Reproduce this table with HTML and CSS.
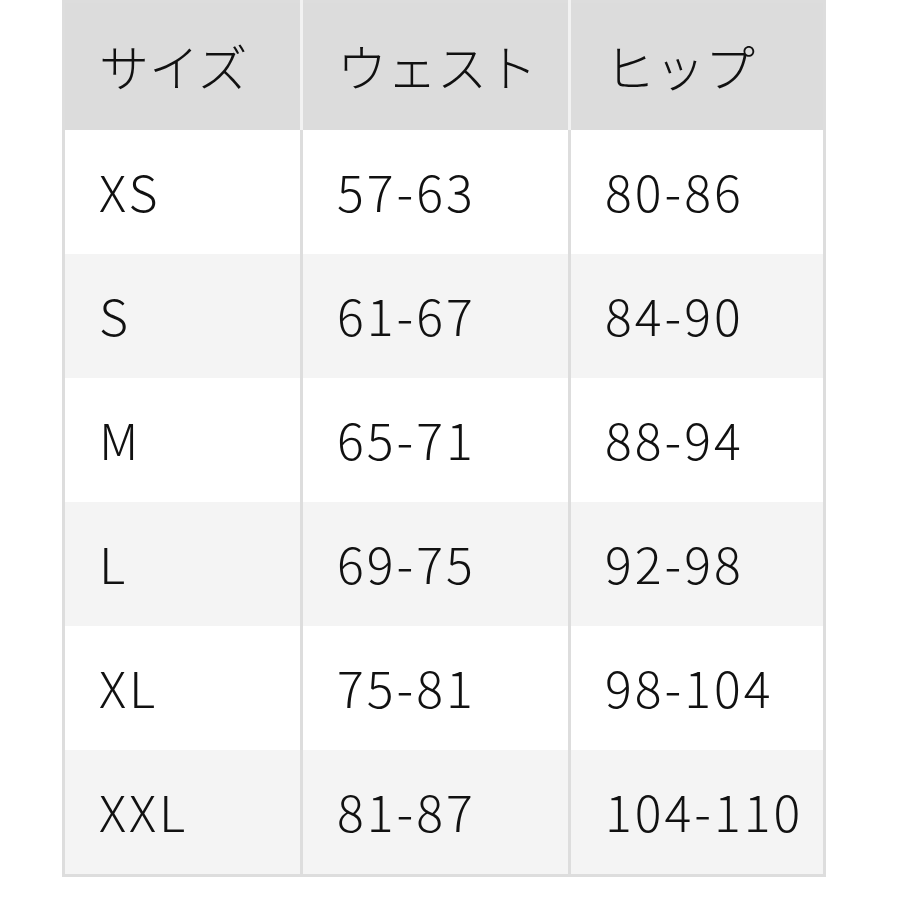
FILE: index.html
```html
<!DOCTYPE html>
<html lang="ja">
<head>
<meta charset="utf-8">
<link rel="stylesheet" href="styles.css">
</head>
<body>
<table class="size-table">
  <colgroup>
    <col class="c1"><col class="c2"><col class="c3">
  </colgroup>
  <thead>
    <tr><th>サイズ</th><th>ウェスト</th><th>ヒップ</th></tr>
  </thead>
  <tbody>
    <tr><td>XS</td><td>57-63</td><td>80-86</td></tr>
    <tr><td>S</td><td>61-67</td><td>84-90</td></tr>
    <tr><td>M</td><td>65-71</td><td>88-94</td></tr>
    <tr><td>L</td><td>69-75</td><td>92-98</td></tr>
    <tr><td>XL</td><td>75-81</td><td>98-104</td></tr>
    <tr><td>XXL</td><td>81-87</td><td>104-110</td></tr>
  </tbody>
</table>
</body>
</html>
```
FILE: styles.css
```css
html, body {
  margin: 0;
  padding: 0;
  background: #ffffff;
}
body {
  padding: 0 0 0 62px;
  font-family: "Noto Sans CJK JP", "Noto Sans", sans-serif;
  color: #111111;
}
.size-table {
  border-collapse: collapse;
  table-layout: fixed;
  width: 761px;
  border: 3px solid #dddddd;
}
.c1 { width: 238px; }
.c2 { width: 268px; }
.c3 { width: 255px; }
.size-table th,
.size-table td {
  border-left: 3px solid #dddddd;
  border-right: 3px solid #dddddd;
  text-align: left;
  padding: 0 0 4px 34px;
  font-size: 50px;
  font-weight: 300;
  line-height: 1;
  letter-spacing: 3px;
}
.size-table th {
  background: #dcdcdc;
  height: 123px;
  letter-spacing: 0;
  border-left-color: #f2f2f2;
  border-right-color: #f2f2f2;
}
.size-table th:first-child { border-left-color: #dddddd; }
.size-table th:last-child { border-right-color: #dddddd; }
.size-table td {
  height: 120px;
}
.size-table tbody tr:nth-child(odd) td { background: #ffffff; }
.size-table tbody tr:nth-child(even) td { background: #f4f4f4; }
```
